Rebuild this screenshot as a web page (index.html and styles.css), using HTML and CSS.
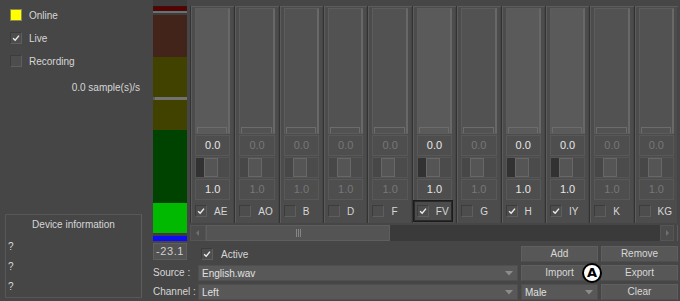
FILE: index.html
```html
<!DOCTYPE html>
<html>

<head>
    <title>Phoneme mixer</title>
    <link rel="stylesheet" href="styles.css">
</head>

<body>
    <div class="app">
        <div class="side">
            <div class="status">
                <div class="status-row"><span class="led"></span>Online</div>
                <div class="status-row"><span class="cb checked"><svg viewBox="0 0 12 12"><path d="M2.5 6.2 L5 8.7 L9.6 3.2"/></svg></span>Live</div>
                <div class="status-row"><span class="cb"></span>Recording</div>
                <div class="rate">0.0 sample(s)/s</div>
            </div>
            <div class="device">
                <div class="device-title">Device information</div>
                <div class="device-line">?</div>
                <div class="device-line">?</div>
                <div class="device-line">?</div>
            </div>
        </div>

        <div class="main">
            <div class="top">
                <!-- level meter -->
                <div class="meter">
                    <div class="seg clip"></div>
                    <div class="seg peak"></div>
                    <div class="seg gap"></div>
                    <div class="seg red"></div>
                    <div class="seg yellow1"></div>
                    <div class="seg mark"></div>
                    <div class="seg yellow2"></div>
                    <div class="seg green"></div>
                    <div class="seg level"></div>
                    <div class="seg gap2"></div>
                    <div class="seg blue"></div>
                </div>

                <div class="panel">
                    <div class="strips">
                        <div class="strip on">
                            <div class="groove"><div class="handle"></div></div>
                            <div class="field">0.0</div>
                            <div class="pan"><div class="pan-fill"></div><div class="pan-knob"></div></div>
                            <div class="field">1.0</div>
                            <div class="strip-check"><span class="cb checked"><svg viewBox="0 0 12 12"><path d="M2.5 6.2 L5 8.7 L9.6 3.2"/></svg></span><span>AE</span></div>
                        </div>
                        <div class="strip">
                            <div class="groove"><div class="handle"></div></div>
                            <div class="field">0.0</div>
                            <div class="pan"><div class="pan-fill"></div><div class="pan-knob"></div></div>
                            <div class="field">1.0</div>
                            <div class="strip-check"><span class="cb"></span><span>AO</span></div>
                        </div>
                        <div class="strip">
                            <div class="groove"><div class="handle"></div></div>
                            <div class="field">0.0</div>
                            <div class="pan"><div class="pan-fill"></div><div class="pan-knob"></div></div>
                            <div class="field">1.0</div>
                            <div class="strip-check"><span class="cb"></span><span>B</span></div>
                        </div>
                        <div class="strip">
                            <div class="groove"><div class="handle"></div></div>
                            <div class="field">0.0</div>
                            <div class="pan"><div class="pan-fill"></div><div class="pan-knob"></div></div>
                            <div class="field">1.0</div>
                            <div class="strip-check"><span class="cb"></span><span>D</span></div>
                        </div>
                        <div class="strip">
                            <div class="groove"><div class="handle"></div></div>
                            <div class="field">0.0</div>
                            <div class="pan"><div class="pan-fill"></div><div class="pan-knob"></div></div>
                            <div class="field">1.0</div>
                            <div class="strip-check"><span class="cb"></span><span>F</span></div>
                        </div>
                        <div class="strip on">
                            <div class="groove"><div class="handle"></div></div>
                            <div class="field">0.0</div>
                            <div class="pan"><div class="pan-fill"></div><div class="pan-knob"></div></div>
                            <div class="field">1.0</div>
                            <div class="strip-check focus"><span class="cb checked"><svg viewBox="0 0 12 12"><path d="M2.5 6.2 L5 8.7 L9.6 3.2"/></svg></span><span>FV</span></div>
                        </div>
                        <div class="strip">
                            <div class="groove"><div class="handle"></div></div>
                            <div class="field">0.0</div>
                            <div class="pan"><div class="pan-fill"></div><div class="pan-knob"></div></div>
                            <div class="field">1.0</div>
                            <div class="strip-check"><span class="cb"></span><span>G</span></div>
                        </div>
                        <div class="strip on">
                            <div class="groove"><div class="handle"></div></div>
                            <div class="field">0.0</div>
                            <div class="pan"><div class="pan-fill"></div><div class="pan-knob"></div></div>
                            <div class="field">1.0</div>
                            <div class="strip-check"><span class="cb checked"><svg viewBox="0 0 12 12"><path d="M2.5 6.2 L5 8.7 L9.6 3.2"/></svg></span><span>H</span></div>
                        </div>
                        <div class="strip on">
                            <div class="groove"><div class="handle"></div></div>
                            <div class="field">0.0</div>
                            <div class="pan"><div class="pan-fill"></div><div class="pan-knob"></div></div>
                            <div class="field">1.0</div>
                            <div class="strip-check"><span class="cb checked"><svg viewBox="0 0 12 12"><path d="M2.5 6.2 L5 8.7 L9.6 3.2"/></svg></span><span>IY</span></div>
                        </div>
                        <div class="strip">
                            <div class="groove"><div class="handle"></div></div>
                            <div class="field">0.0</div>
                            <div class="pan"><div class="pan-fill"></div><div class="pan-knob"></div></div>
                            <div class="field">1.0</div>
                            <div class="strip-check"><span class="cb"></span><span>K</span></div>
                        </div>
                        <div class="strip">
                            <div class="groove"><div class="handle"></div></div>
                            <div class="field">0.0</div>
                            <div class="pan"><div class="pan-fill"></div><div class="pan-knob"></div></div>
                            <div class="field">1.0</div>
                            <div class="strip-check"><span class="cb"></span><span>KG</span></div>
                        </div>
                    </div>

                    <div class="hscroll">
                        <div class="sb-arrow"><svg viewBox="0 0 16 16"><path d="M9 5 L6 8 L9 11 Z"/></svg></div>
                        <div class="sb-thumb"><span class="grip"></span><span class="grip"></span><span class="grip"></span></div>
                        <div class="sb-track"></div>
                        <div class="sb-arrow right"><svg viewBox="0 0 14 16"><path d="M6 5 L9 8 L6 11 Z"/></svg></div>
                    </div>
                </div>
            </div>

            <div class="controls">
                <div class="meter-value">-23.1</div>
                <div class="active"><span class="cb checked"><svg viewBox="0 0 12 12"><path d="M2.5 6.2 L5 8.7 L9.6 3.2"/></svg></span>Active</div>
                <div class="btn end">Add</div>
                <div class="btn end">Remove</div>

                <div class="label">Source :</div>
                <div class="select">English.wav<svg viewBox="0 0 8 5"><path d="M0 0 H8 L4 4.5 Z"/></svg></div>
                <div class="btn">Import</div>
                <div class="btn">Export</div>

                <div class="label">Channel :</div>
                <div class="select">Left<svg viewBox="0 0 8 5"><path d="M0 0 H8 L4 4.5 Z"/></svg></div>
                <div class="select">Male<svg viewBox="0 0 8 5"><path d="M0 0 H8 L4 4.5 Z"/></svg></div>
                <div class="btn">Clear</div>
            </div>
        </div>

        <div class="marker">A</div>
    </div>
</body>

</html>
```

FILE: styles.css
```css
body {
    margin: 0;
    background-color: #464646;
    font-family: "Liberation Sans", Arial, sans-serif;
    font-size: 10px;
    color: #d6d6d6;
}

.app {
    position: relative;
    display: flex;
    width: 680px;
    height: 301px;
    overflow: hidden;
}

/* left column */

.side {
    width: 142px;
    display: flex;
    flex-direction: column;
}

.status {
    padding: 9px 0 0 10px;
    display: flex;
    flex-direction: column;
    gap: 11px;
}

.status-row {
    display: flex;
    align-items: center;
    gap: 7px;
    height: 12px;
}

.led {
    width: 10px;
    height: 10px;
    background-color: #ffff00;
    border: 1px solid #8a8a50;
}

.cb {
    box-sizing: border-box;
    width: 12px;
    height: 12px;
    background-color: #4d4d4d;
    border: 1px solid #5e5e5e;
    border-top-color: #3c3c3c;
    border-left-color: #3c3c3c;
    display: inline-block;
    flex: none;
}

.cb svg {
    display: block;
    width: 10px;
    height: 10px;
}

.cb path {
    fill: none;
    stroke: #ececec;
    stroke-width: 1.7;
}

.rate {
    text-align: right;
    padding-right: 2px;
    margin-top: 4px;
}

.device {
    margin: auto 0 3px 5px;
    height: 82px;
    border: 1px solid #575757;
    border-right-color: #5c5c5c;
}

.device-title {
    text-align: center;
    padding-top: 3px;
    line-height: 14px;
    margin-bottom: 5px;
}

.device-line {
    line-height: 20px;
    padding-left: 2px;
}

/* main area */

.main {
    flex: 1;
    padding: 0 2px 0 11px;
    display: flex;
    flex-direction: column;
}

.top {
    display: flex;
    height: 241px;
}

.meter {
    width: 34px;
    display: flex;
    flex-direction: column;
    background-color: #3d3d3d;
    padding-top: 6px;
}

.seg {
    flex: none;
}

.clip { height: 5px; background-color: #5a0000; box-shadow: inset 0 0 0 1px #3a1010; }
.peak { height: 2px; background-color: #6e6e6e; }
.gap { height: 2px; }
.red { height: 42px; background-color: #42241a; }
.yellow1 { height: 40px; background-color: #424200; }
.mark { height: 3px; background-color: #727272; border-left: 2px solid #5a5a5a; }
.yellow2 { height: 30px; background-color: #424200; }
.green { height: 73px; background-color: #004300; }
.level { height: 30px; background-color: #00b900; }
.gap2 { height: 3px; }
.blue { height: 5px; background-color: #0c0cf2; }

.panel {
    flex: 1;
    margin-left: 3px;
    padding-top: 6px;
    display: flex;
    flex-direction: column;
}

.strips {
    display: flex;
    height: 217px;
    background-color: #3c3c3c;
}

.strip {
    flex: 1;
    min-width: 0;
    display: flex;
    flex-direction: column;
    background-color: #4c4c4c;
    border-left: 1px solid #333;
    box-shadow: inset 1px 1px 0 #5c5c5c, inset -1px 0 0 #454545;
    padding: 2px 4px 1px 4px;
}

.groove {
    flex: 1;
    display: flex;
    flex-direction: column;
    background-color: #525252;
    border: 1px solid #5c5c5c;
    border-right: 2px solid #686868;
}

.strip.on .groove {
    background-color: #5a5a5a;
}

.handle {
    margin: auto 1px 0 1px;
    height: 5px;
    border: 1px solid #6c6c6c;
    border-bottom: none;
}

.field {
    margin-top: 1px;
    height: 19px;
    line-height: 19px;
    border: 1px solid #585858;
    background-color: #4e4e4e;
    text-align: center;
    font-size: 11px;
    color: #777;
}

.strip.on .field {
    color: #e6e6e6;
}

.pan {
    margin-top: 1px;
    height: 21px;
    box-sizing: border-box;
    display: flex;
    background-color: #4b4b4b;
    border: 1px solid #555;
}

.pan-fill {
    width: 8px;
    background-color: #474747;
}

.strip.on .pan-fill {
    background-color: #323232;
}

.pan-knob {
    width: 12px;
    background-color: #555;
    border: 1px solid #676767;
}

.strip-check {
    height: 20px;
    display: flex;
    align-items: center;
    gap: 7px;
    margin: 0 -1px 0 -4px;
    padding-left: 3px;
    border: 1px solid transparent;
}

.strip-check.focus {
    border-color: #1c1c1c;
    box-shadow: inset 0 0 0 1px #2a2a2a;
}

.hscroll {
    margin-top: 2px;
    height: 16px;
    display: flex;
    border-right: 1px solid #5c5c5c;
}

.sb-arrow {
    width: 16px;
    background-color: #4c4c4c;
    box-shadow: inset 0 0 0 1px #555;
}

.sb-arrow.right {
    width: 14px;
    margin-right: 3px;
}

.sb-arrow svg {
    display: block;
    width: 100%;
    height: 16px;
}

.sb-arrow path {
    fill: #707070;
}

.sb-thumb {
    width: 182px;
    background-color: #545454;
    border: 1px solid #5e5e5e;
    display: flex;
    justify-content: center;
    align-items: center;
    gap: 1px;
}

.grip {
    width: 1px;
    height: 8px;
    background-color: #858585;
}

.sb-track {
    flex: 1;
    background-color: #3a3a3a;
}

/* bottom controls */

.controls {
    margin-top: 2px;
    display: grid;
    grid-template-columns: 42px 1fr 77px 77px;
    grid-template-rows: 19px 16px 16px;
    column-gap: 3px;
    row-gap: 3px;
}

.meter-value {
    width: 32px;
    height: 15px;
    line-height: 15px;
    background-color: #525252;
    border: 1px solid #5e5e5e;
    text-align: center;
    color: #cfcfcf;
    font-size: 11px;
    letter-spacing: 0.6px;
}

.active {
    display: flex;
    align-items: center;
    gap: 8px;
    padding-left: 3px;
    align-self: end;
    margin-bottom: 2px;
}

.btn {
    box-sizing: border-box;
    height: 16px;
    line-height: 14px;
    background-color: #575757;
    border: 1px solid #5f5f5f;
    border-bottom-color: #4e4e4e;
    text-align: center;
    color: #d8d8d8;
}

.btn.end {
    align-self: end;
}

.label {
    white-space: nowrap;
    line-height: 16px;
}

.select {
    box-sizing: border-box;
    height: 16px;
    display: flex;
    align-items: center;
    justify-content: space-between;
    padding: 0 4px 0 3px;
    background-color: #585858;
    border: 1px solid #4f4f4f;
    color: #e0e0e0;
}

.select svg {
    width: 8px;
    height: 5px;
}

.select path {
    fill: #8c8c8c;
}

.marker {
    position: absolute;
    left: 582px;
    top: 263px;
    box-sizing: border-box;
    width: 20px;
    height: 20px;
    border-radius: 50%;
    background-color: #fff;
    border: 2px solid #000;
    color: #000;
    font-family: "DejaVu Sans", sans-serif;
    font-weight: bold;
    font-size: 13px;
    line-height: 16px;
    text-align: center;
}
```
